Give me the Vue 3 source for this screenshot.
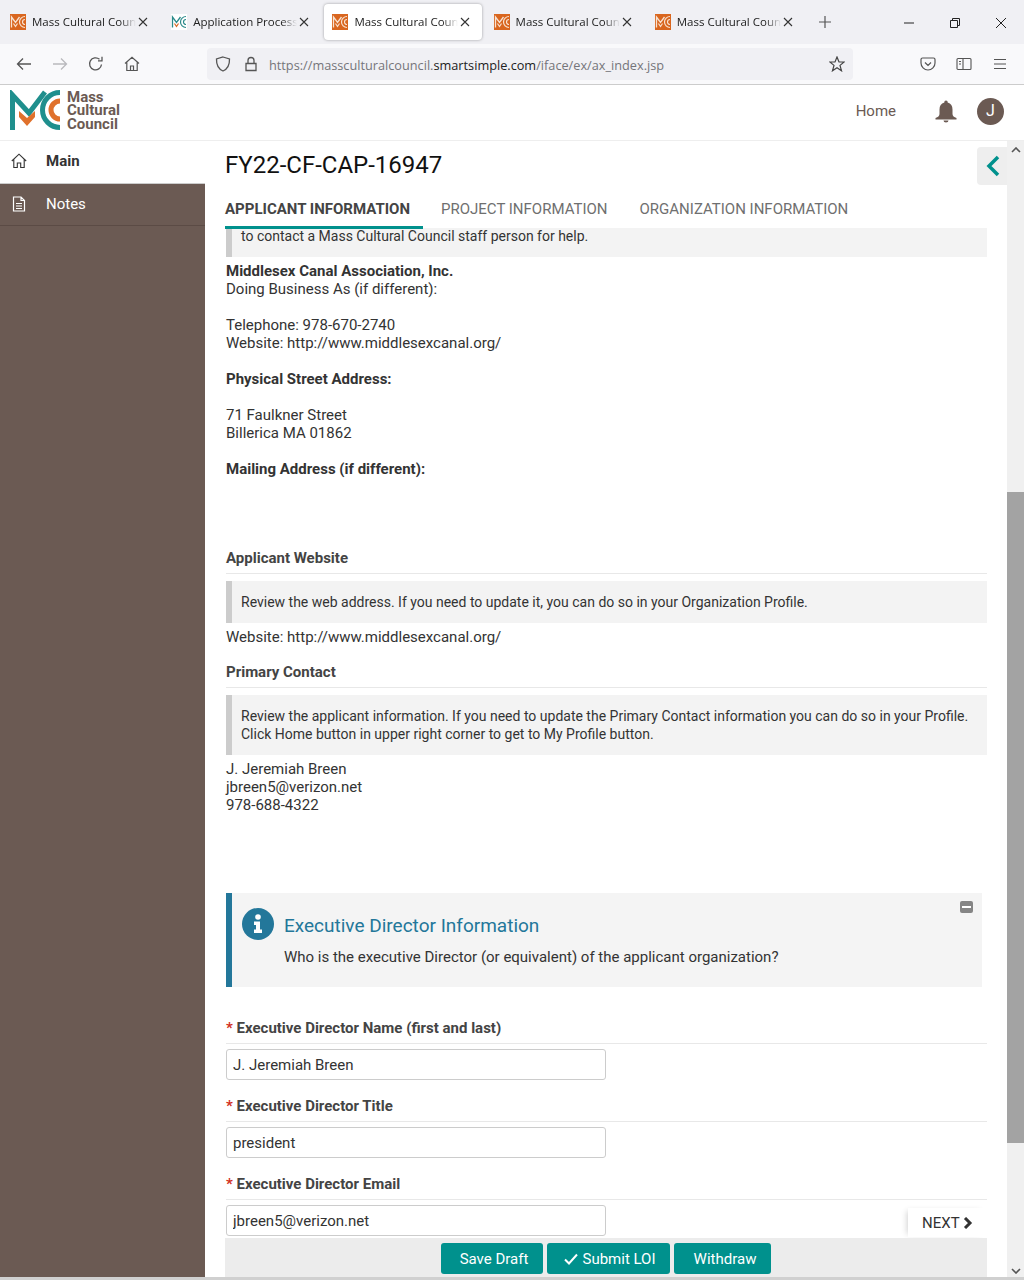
<script setup>
const tabs = [
  { title: 'Mass Cultural Council', kind: 'orange' },
  { title: 'Application Process', kind: 'white' },
  { title: 'Mass Cultural Council', kind: 'orange', active: true },
  { title: 'Mass Cultural Council', kind: 'orange' },
  { title: 'Mass Cultural Council', kind: 'orange' },
]
const pageTabs = ['APPLICANT INFORMATION', 'PROJECT INFORMATION', 'ORGANIZATION INFORMATION']
const fields = [
  { label: 'Executive Director Name (first and last)', value: 'J. Jeremiah Breen' },
  { label: 'Executive Director Title', value: 'president' },
  { label: 'Executive Director Email', value: 'jbreen5@verizon.net' },
]
</script>

<template>
  <div class="app">
    <div class="tabstrip">
      <div v-for="(t, i) in tabs" :key="i" class="tab" :class="{ active: t.active }">
        <svg class="fav" viewBox="0 0 16 16" width="16" height="16">
          <rect width="16" height="16" :fill="t.kind === 'orange' ? '#d9661f' : '#fff'" />
          <path d="M1.500 13.500V3L5.500 8.500L9.500 3" fill="none" :stroke="t.kind === 'orange' ? '#f8e3d2' : '#2b8a8a'" stroke-width="1.300" />
          <path d="M3.500 9.500L5.500 12.500L7.500 9.500" fill="none" :stroke="t.kind === 'orange' ? '#f8e3d2' : '#d9661f'" stroke-width="1.200" />
          <path d="M15 2.500A5.500 5.500 0 0 0 15 13.500M15 5.500A2.500 2.500 0 0 0 15 10.500" fill="none" :stroke="t.kind === 'orange' ? '#f8e3d2' : '#2b8a8a'" stroke-width="1.200" />
        </svg>
        <span class="tab-title">{{ t.title }}</span>
        <svg class="tab-x" viewBox="0 0 10 10" width="10" height="10"><path d="M1 1L9 9M9 1L1 9" stroke="#333" stroke-width="1.100" /></svg>
      </div>
      <svg class="plus" viewBox="0 0 12 12" width="12" height="12"><path d="M6 0V12M0 6H12" stroke="#555" stroke-width="1.200" /></svg>
      <div class="winctl">
        <svg viewBox="0 0 10 10" width="10" height="10"><path d="M0 5H10" stroke="#222" /></svg>
        <svg viewBox="0 0 10 10" width="10" height="10"><path d="M.5 2.500H7.500V9.500H.5ZM2.500 2.500V.5H9.500V7.500H7.500" fill="none" stroke="#222" /></svg>
        <svg viewBox="0 0 10 10" width="10" height="10"><path d="M0 0L10 10M10 0L0 10" stroke="#222" /></svg>
      </div>
    </div>

    <div class="toolbar">
      <div class="nav">
        <svg viewBox="0 0 16 16" width="16" height="16"><path d="M15 8H1.500M7 2.500L1.500 8L7 13.500" fill="none" stroke="#555" stroke-width="1.300" /></svg>
        <svg viewBox="0 0 16 16" width="16" height="16"><path d="M1 8H14.500M9 2.500L14.500 8L9 13.500" fill="none" stroke="#b9b9bd" stroke-width="1.300" /></svg>
        <svg viewBox="0 0 16 16" width="16" height="16"><path d="M13.500 8.500A6 6 0 1 1 11.500 3.300M14 .8V4.800H10" fill="none" stroke="#555" stroke-width="1.300" /></svg>
        <svg viewBox="0 0 16 16" width="16" height="16"><path d="M1 7.500L8 1.200L15 7.500M2.800 6.500V14.500H13.200V6.500M6.500 14.500V10H9.500V14.500" fill="none" stroke="#555" stroke-width="1.200" /></svg>
      </div>
      <div class="urlbar">
        <svg class="shield" viewBox="0 0 16 16" width="16" height="16"><path d="M8 1L14.500 3C14.700 9 12.500 13 8 15C3.500 13 1.300 9 1.500 3Z" fill="none" stroke="#555" stroke-width="1.300" /></svg>
        <svg class="lock" viewBox="0 0 14 16" width="14" height="16"><path d="M2 7.500H12V14.500H2ZM4 7.500V4.500A3 3 0 0 1 10 4.500V7.500" fill="none" stroke="#555" stroke-width="1.300" /></svg>
        <span class="url">https://massculturalcouncil.<b>smartsimple.com</b>/iface/ex/ax_index.jsp</span>
        <svg class="star" viewBox="0 0 16 16" width="16" height="16"><path d="M8 1L10 6H15.200L11 9.400L12.500 14.800L8 11.800L3.500 14.800L5 9.400L.8 6H6Z" fill="none" stroke="#444" stroke-width="1.200" /></svg>
      </div>
      <div class="tools">
        <svg viewBox="0 0 16 16" width="16" height="16"><path d="M2.500 2H13.500A1.500 1.500 0 0 1 15 3.500V7A7 7 0 0 1 1 7V3.500A1.500 1.500 0 0 1 2.500 2ZM5 6.500L8 9.500L11 6.500" fill="none" stroke="#555" stroke-width="1.200" /></svg>
        <svg viewBox="0 0 16 16" width="16" height="16"><path d="M2 2.500H14A1 1 0 0 1 15 3.500V12.500A1 1 0 0 1 14 13.500H2A1 1 0 0 1 1 12.500V3.500A1 1 0 0 1 2 2.500ZM7 2.500V13.500M3 5.500H5M3 8H5" fill="none" stroke="#555" stroke-width="1.100" /></svg>
        <svg viewBox="0 0 16 16" width="16" height="16"><path d="M2 3.500H14M2 8H14M2 12.500H14" stroke="#555" stroke-width="1.200" /></svg>
      </div>
    </div>

    <header class="sitehead">
      <div class="logo">
        <svg class="mark" viewBox="0 0 51 40" width="51" height="40">
          <path d="M2.500 40V5L19 23L35 2" fill="none" stroke="#1f8f8d" stroke-width="5" />
          <path d="M9 21L17 28L25 21V27L17 36L9 27Z" fill="#e0712c" />
          <path d="M50 2.500A17.500 17.500 0 0 0 50 37.500" fill="none" stroke="#1f8f8d" stroke-width="5" />
          <path d="M50 11A9 9 0 0 0 50 29" fill="none" stroke="#e0712c" stroke-width="5" />
        </svg>
        <div class="logotext">Mass<br />Cultural<br />Council</div>
      </div>
      <span class="home">Home</span>
      <svg class="bell" viewBox="0 0 24 24" width="24" height="24"><path d="M12 1.500A1.800 1.800 0 0 1 13.700 3.500C17 4.500 18.500 7 18.500 10.500V15C18.500 17 20 18 22.500 19V20.500H1.500V19C4 18 5.500 17 5.500 15V10.500C5.500 7 7 4.500 10.300 3.500A1.800 1.800 0 0 1 12 1.500ZM9.500 21.500H14.500A2.500 2 0 0 1 9.500 21.500Z" fill="#6b5a53" /></svg>
      <span class="avatar">J</span>
    </header>

    <div class="body">
      <aside class="sidebar">
        <div class="side-item current">
          <svg viewBox="0 0 16 16" width="16" height="16"><path d="M.8 8L8 1.200L15.200 8M2.800 6.500V14.500H6.300V10H9.700V14.500H13.200V6.500" fill="none" stroke="#333" stroke-width="1.100" /></svg>
          <span>Main</span>
        </div>
        <div class="side-item">
          <svg viewBox="0 0 16 16" width="16" height="16"><path d="M2.500 1H10L13.500 4.500V15H2.500ZM10 1V4.500H13.500M5 7.500H11M5 10H11M5 12.500H11" fill="none" stroke="#fff" stroke-width="1.200" /></svg>
          <span>Notes</span>
        </div>
      </aside>

      <main class="main">
        <h1 class="title">FY22-CF-CAP-16947</h1>
        <nav class="pagetabs">
          <span v-for="(p, i) in pageTabs" :key="p" class="pagetab" :class="{ on: i === 0 }">{{ p }}</span>
        </nav>

        <div class="scroller">
          <div class="notice first">to contact a Mass Cultural Council staff person for help.</div>

          <div class="org">
            <p><b>Middlesex Canal Association, Inc.</b><br />Doing Business As (if different):</p>
            <p>Telephone: 978-670-2740<br />Website: http://www.middlesexcanal.org/</p>
            <p><b>Physical Street Address:</b></p>
            <p>71 Faulkner Street<br />Billerica MA 01862</p>
            <p class="last"><b>Mailing Address (if different):</b></p>
          </div>

          <h3 class="section website">Applicant Website</h3>
          <div class="notice">Review the web address. If you need to update it, you can do so in your Organization Profile.</div>
          <div class="plain">Website: http://www.middlesexcanal.org/</div>

          <h3 class="section">Primary Contact</h3>
          <div class="notice">Review the applicant information. If you need to update the Primary Contact information you can do so in your Profile.<br />Click Home button in upper right corner to get to My Profile button.</div>
          <div class="plain">J. Jeremiah Breen<br />jbreen5@verizon.net<br />978-688-4322</div>

          <section class="panel">
            <svg class="info" viewBox="0 0 32 32" width="32" height="32">
              <circle cx="16" cy="16" r="16" fill="#23779a" />
              <circle cx="16" cy="9" r="2.800" fill="#fff" />
              <path d="M12 13.500H18V21.500H20V25H12V21.500H14V17H12Z" fill="#fff" />
            </svg>
            <div>
              <h2 class="panel-title">Executive Director Information</h2>
              <p class="panel-text">Who is the executive Director (or equivalent) of the applicant organization?</p>
            </div>
            <span class="collapse"><i></i></span>
          </section>

          <div v-for="(f, i) in fields" :key="f.label" class="field" :class="{ firstfield: i === 0 }">
            <h3 class="section flabel"><span class="req">*</span> {{ f.label }}</h3>
            <input class="input" type="text" :value="f.value" readonly />
          </div>

          <div class="next">NEXT
            <svg viewBox="0 0 10 12" width="10" height="12"><path d="M2 1L7 6L2 11" fill="none" stroke="#333" stroke-width="3" /></svg>
          </div>
        </div>

        <div class="footer">
          <button class="btn save" type="button">Save Draft</button>
          <button class="btn submit" type="button">
            <svg viewBox="0 0 14 12" width="14" height="12"><path d="M1 6.500L5 10.500L13 1.500" fill="none" stroke="#fff" stroke-width="2" /></svg>
            Submit LOI
          </button>
          <button class="btn withdraw" type="button">Withdraw</button>
        </div>

        <button class="drawer" type="button" aria-label="Collapse">
          <svg viewBox="0 0 14 22" width="14" height="22"><path d="M12 2L3 11L12 20" fill="none" stroke="#00918d" stroke-width="3.500" /></svg>
        </button>
      </main>

      <div class="scrollbar">
        <svg class="arrow up" viewBox="0 0 10 6" width="10" height="6"><path d="M1 5L5 1L9 5" fill="none" stroke="#555" stroke-width="1.600" /></svg>
        <div class="thumb"></div>
        <svg class="arrow down" viewBox="0 0 10 6" width="10" height="6"><path d="M1 1L5 5L9 1" fill="none" stroke="#555" stroke-width="1.600" /></svg>
      </div>
    </div>
    <div class="bottomstrip"></div>
  </div>
</template>

<style>
html, body { margin: 0; background: #fff; }
</style>

<style scoped>
.app {
  width: 1024px;
  height: 1280px;
  display: flex;
  flex-direction: column;
  overflow: hidden;
  font-family: Roboto, "Liberation Sans", sans-serif;
  font-size: 15px;
  line-height: 18px;
  color: #333;
  background: #fff;
}
.tabstrip {
  height: 44px;
  background: #f0f0f4;
  display: flex;
  align-items: flex-start;
  padding: 4px 0 0 2px;
  box-sizing: border-box;
  flex: none;
  position: relative;
}
.tab {
  width: 158px;
  height: 36px;
  margin-right: 3.2px;
  box-sizing: border-box;
  padding: 0 0 0 8px;
  display: flex;
  align-items: center;
  border-radius: 4px;
  flex: none;
}
.tab.active {
  background: #fff;
  box-shadow: 0 0 3px rgba(0, 0, 0, 0.35);
}
.fav { flex: none; }
.tab-title {
  margin-left: 6px;
  width: 104px;
  overflow: hidden;
  white-space: nowrap;
  font-family: "Open Sans", sans-serif;
  font-size: 11.5px;
  color: #222;
  -webkit-mask-image: linear-gradient(90deg, #000 85%, transparent);
  mask-image: linear-gradient(90deg, #000 85%, transparent);
}
.tab-x { margin-left: 2px; flex: none; }
.plus { margin: 12px 0 0 11px; flex: none; }
.winctl {
  margin-left: auto;
  display: flex;
  gap: 36px;
  padding: 14px 18px 0 0;
}
.toolbar {
  height: 41px;
  background: #f9f9fb;
  border-bottom: 1px solid #ccc;
  display: flex;
  align-items: center;
  box-sizing: border-box;
  flex: none;
}
.nav {
  width: 207px;
  box-sizing: border-box;
  padding-left: 16px;
  display: flex;
  gap: 20px;
}
.urlbar {
  width: 646px;
  height: 32px;
  background: #f0f0f4;
  border-radius: 4px;
  display: flex;
  align-items: center;
  box-sizing: border-box;
  padding-left: 8px;
}
.lock { margin-left: 13px; }
.url {
  margin: 2px 0 0 11px;
  font-family: "Open Sans", sans-serif;
  font-size: 12.72px;
  color: #75757a;
  white-space: nowrap;
}
.url b { font-weight: 400; color: #222; }
.star { margin-left: auto; margin-right: 8px; }
.tools {
  flex: 1;
  display: flex;
  justify-content: flex-end;
  gap: 20px;
  padding-right: 16px;
}
.sitehead {
  height: 56px;
  box-sizing: border-box;
  border-bottom: 1px solid #eee;
  display: flex;
  align-items: center;
  flex: none;
  padding: 0 20px 3px 10px;
}
.logo { display: flex; align-items: center; }
.mark { margin-bottom: 2px; }
.logotext {
  margin-left: 6px;
  font-weight: 700;
  font-size: 15px;
  line-height: 13.5px;
  color: #6b5a53;
}
.home { margin-left: auto; color: #6b5a53; font-size: 15px; }
.bell { margin-left: 38px; }
.avatar {
  margin-left: 19px;
  width: 27px;
  height: 27px;
  border-radius: 50%;
  background: #6b5a53;
  color: #fff;
  display: flex;
  align-items: center;
  justify-content: center;
  font-size: 16px;
}
.body {
  flex: 1;
  display: flex;
  min-height: 0;
}
.sidebar {
  width: 205px;
  flex: none;
  background: #6b5a53;
}
.side-item {
  height: 42px;
  box-sizing: border-box;
  display: flex;
  align-items: center;
  padding: 0 0 2px 11px;
  color: #fff;
  border-bottom: 1px solid #5b4b45;
}
.side-item span { margin-left: 19px; }
.side-item.current {
  height: 43px;
  background: #fff;
  color: #333;
  font-weight: 700;
  border-bottom: 1px solid #ccc;
}
.main {
  flex: 1;
  min-width: 0;
  display: flex;
  flex-direction: column;
  position: relative;
}
.title {
  margin: 0;
  padding: 10px 0 0 20px;
  font-weight: 400;
  font-size: 24px;
  line-height: 28px;
  color: #111;
}
.pagetabs {
  margin: 21px 0 0 20px;
  display: flex;
  flex: none;
  height: 28px;
  position: relative;
  z-index: 1;
}
.pagetab {
  color: #6f6f6f;
  margin-right: 32px;
  white-space: nowrap;
}
.pagetab.on {
  height: 26px;
  font-weight: 700;
  color: #444;
  padding-right: 13px;
  margin-right: 18px;
  border-bottom: 3px solid #00918d;
}
.scroller {
  flex: 1;
  min-height: 0;
  overflow: hidden;
  padding: 0 20px 0 21px;
  position: relative;
}
.notice {
  margin-top: 7px;
  padding: 12px 15px 12px 9px;
  background: #f3f3f3;
  border-left: 6px solid #ccc;
  font-size: 14px;
}
.notice.first {
  margin-top: 0;
  padding-top: 0;
  padding-bottom: 12px;
  height: 17px;
  line-height: 16px;
}
.org { margin-top: 5px; }
.org p { margin: 0 0 18px; }
.org p.last { margin: 0; }
.section {
  margin: 17px 0 0;
  padding-bottom: 6px;
  border-bottom: 1px solid #e8e8e8;
  font-size: 15px;
  line-height: 18px;
  font-weight: 700;
  color: #444;
}
.section.website { margin-top: 71px; }
.plain { margin-top: 5px; }
.panel {
  margin: 79px 5px 0 0;
  height: 94px;
  box-sizing: border-box;
  background: #f4f4f4;
  border-left: 6px solid #23779a;
  padding: 15px 0 0 10px;
  display: flex;
  gap: 10px;
  position: relative;
}
.info { flex: none; }
.panel-title {
  margin: 7px 0 0;
  font-weight: 400;
  font-size: 19px;
  line-height: 22px;
  color: #23779a;
}
.panel-text { margin: 11px 0 0; }
.collapse {
  position: absolute;
  top: 8px;
  right: 9px;
  width: 13px;
  height: 12px;
  border-radius: 2px;
  background: #858585;
  display: flex;
  align-items: center;
  justify-content: center;
}
.collapse i { width: 9px; height: 2px; background: #fff; }
.firstfield .flabel { margin-top: 32px; }
.req { color: #d2301c; }
.input {
  display: block;
  margin-top: 5px;
  width: 380px;
  height: 31px;
  box-sizing: border-box;
  border: 1px solid #ccc;
  border-radius: 3px;
  background: #fff;
  padding: 0 6px;
  font: inherit;
  color: #333;
  outline: none;
}
.next {
  position: absolute;
  right: 20px;
  bottom: 1px;
  width: 79px;
  height: 29px;
  box-sizing: border-box;
  padding-left: 14px;
  background: #fff;
  box-shadow: -4px 0 6px -3px rgba(0, 0, 0, 0.18);
  display: flex;
  align-items: center;
  gap: 3px;
  white-space: nowrap;
}
.footer {
  flex: none;
  height: 39px;
  margin: 0 20px;
  box-sizing: border-box;
  background: #ececec;
  display: flex;
  justify-content: center;
  gap: 4px;
  padding-top: 5px;
}
.btn {
  height: 31px;
  border: none;
  border-radius: 3px;
  background: #00918d;
  color: #fff;
  font: inherit;
  display: flex;
  align-items: center;
  justify-content: center;
  gap: 4px;
}
.save { width: 102px; padding: 0 0 0 4px; }
.submit { width: 123px; padding: 0 0 0 3px; }
.withdraw { width: 97px; padding: 0 0 0 5px; }
.drawer {
  position: absolute;
  top: 6px;
  right: 0;
  width: 30px;
  height: 38px;
  border: none;
  padding: 0 0 0 2px;
  background: #eee;
  border-radius: 4px 0 0 4px;
  display: flex;
  align-items: center;
  justify-content: center;
}
.scrollbar {
  width: 17px;
  flex: none;
  background: #f0f0f0;
  position: relative;
}
.thumb {
  position: absolute;
  left: 0;
  right: 0;
  top: 351px;
  height: 651px;
  background: #a3a3a3;
}
.arrow { position: absolute; left: 4px; }
.arrow.up { top: 6px; }
.arrow.down { bottom: 3px; }
.bottomstrip {
  height: 3px;
  flex: none;
  background: #d0d0d0;
}
</style>
